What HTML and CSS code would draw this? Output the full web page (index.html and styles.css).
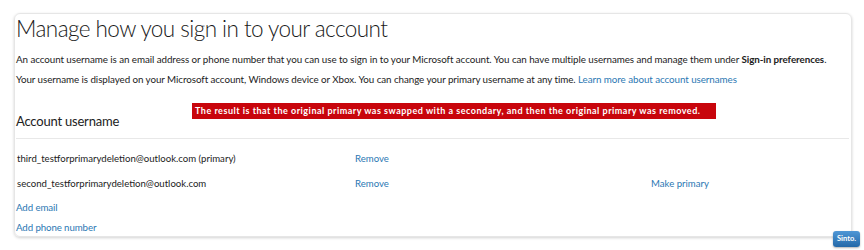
FILE: index.html
```html
<!DOCTYPE html>
<html lang="en">
<head>
<meta charset="utf-8">
<title>Manage how you sign in</title>
<link rel="stylesheet" href="styles.css">
</head>
<body>
<div class="card">
  <h1 class="title">Manage how you sign in to your account</h1>
  <p class="para p1">An account username is an email address or phone number that you can use to sign in to your Microsoft account. You can have multiple usernames and manage them under <b>Sign-in preferences</b>.</p>
  <p class="para p2">Your username is displayed on your Microsoft account, Windows device or Xbox. You can change your primary username at any time. <a class="link" href="#">Learn more about account usernames</a></p>
  <div class="section">
    <h2 class="subtitle">Account username</h2>
    <div class="banner">The result is that the original primary was swapped with a secondary, and then the original primary was removed.</div>
  </div>
  <div class="rows">
    <div class="row">
      <span class="email">third_testforprimarydeletion@outlook.com (primary)</span>
      <a class="link" href="#">Remove</a>
      <span></span>
    </div>
    <div class="row">
      <span class="email">second_testforprimarydeletion@outlook.com</span>
      <a class="link" href="#">Remove</a>
      <a class="link" href="#">Make primary</a>
    </div>
  </div>
  <div class="adds">
    <a class="link" href="#">Add email</a>
    <a class="link" href="#">Add phone number</a>
  </div>
</div>
<div class="badge">Sinto.</div>
</body>
</html>
```
FILE: styles.css
```css
html, body {
  margin: 0;
  padding: 0;
  background: #fff;
}
body {
  position: relative;
  width: 864px;
  height: 250px;
  overflow: hidden;
  font-family: "Lato", "Open Sans", sans-serif;
  color: #222;
}
.card {
  margin: 13px 0 0 14px;
  width: 835px;
  height: 222px;
  border: 1px solid #e6e6e6;
  border-radius: 6px;
  box-shadow: 0 1px 3px rgba(0,0,0,0.18);
  padding: 0 0 0 1px;
  box-sizing: content-box;
}
.title {
  margin: 0;
  font-weight: 300;
  font-size: 22.5px;
  letter-spacing: -0.55px;
  line-height: 30px;
  color: #1a1a1a;
  white-space: nowrap;
}
.para {
  margin: 0;
  font-size: 9.8px;
  letter-spacing: -0.065px;
  line-height: 20px;
  white-space: nowrap;
}
.p1 { margin-top: 5px; }
.para b { font-weight: 700; }
.link {
  color: #2b78b3;
  text-decoration: none;
}
.section {
  position: relative;
  margin-top: 23px;
  height: 26px;
  border-bottom: 1px solid #e8e8e8;
  margin-right: 2px;
}
.subtitle {
  margin: 0;
  font-weight: 400;
  font-size: 13px;
  letter-spacing: -0.2px;
  line-height: 18px;
  color: #222;
}
.banner {
  position: absolute;
  left: 176px;
  top: -9px;
  width: 524px;
  height: 16px;
  box-sizing: border-box;
  padding-left: 3px;
  background: #c8050c;
  color: #fff;
  font-weight: 700;
  font-size: 9px;
  line-height: 16px;
  letter-spacing: 0.5px;
  white-space: nowrap;
  overflow: hidden;
}
.rows {
  margin-top: 7px;
}
.row {
  display: grid;
  grid-template-columns: 338px 296px auto;
  height: 25px;
  align-items: center;
  font-size: 9.6px;
  letter-spacing: 0;
  padding-left: 1px;
}
.adds {
  margin-top: 1px;
  display: flex;
  flex-direction: column;
  font-size: 9.7px;
  letter-spacing: -0.1px;
  line-height: 20px;
}
.badge {
  position: absolute;
  left: 833px;
  top: 231px;
  width: 27px;
  height: 16px;
  border-radius: 3px;
  background: linear-gradient(#4f97d6, #2368a8);
  color: #fff;
  font-size: 7.5px;
  font-weight: 700;
  line-height: 16px;
  text-align: center;
  box-shadow: 0 1px 2px rgba(0,0,0,0.3);
}
```
